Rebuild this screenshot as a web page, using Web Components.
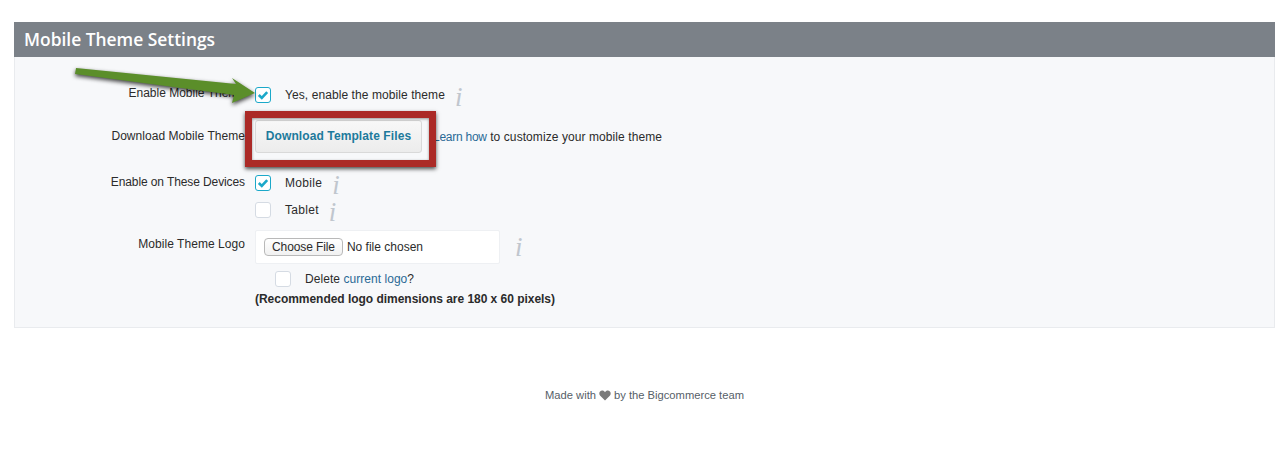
<!DOCTYPE html>
<html>
<head>
<meta charset="utf-8">
<title>Mobile Theme Settings</title>
<style>
    html, body {
        margin: 0;
        padding: 0;
        background: #fff;
        overflow: hidden;
    }
    body {
        font-family: "Liberation Sans", Arial, sans-serif;
        font-size: 12px;
        color: #2b2b2b;
    }
    a {
        color: #2a6a96;
        text-decoration: none;
    }
</style>
</head>
<body>
<settings-panel heading="Mobile Theme Settings">
    <setting-row label="Enable Mobile Theme" height="63" pad="30" label-pad="29">
        <check-box checked></check-box>
        <span style="margin-left:14px;letter-spacing:.08px">Yes, enable the mobile theme</span>
        <info-icon style="margin-left:10px"></info-icon>
    </setting-row>
    <setting-row label="Download Mobile Theme" height="55" pad="0" label-pad="9" style="--label-spacing:.05px">
        <action-button>Download Template Files</action-button>
        <span style="margin:9px 0 0 11px;letter-spacing:.08px"><a href="#" style="letter-spacing:-.25px">Learn how</a> to customize your mobile theme</span>
    </setting-row>
    <setting-row label="Enable on These Devices" height="27" pad="0" label-pad="0" style="--label-spacing:-.1px">
        <check-box checked></check-box>
        <span style="margin-left:14px;letter-spacing:.3px">Mobile</span>
        <info-icon style="margin-left:10px"></info-icon>
    </setting-row>
    <setting-row label="" height="28" pad="0">
        <check-box></check-box>
        <span style="margin-left:14px;letter-spacing:.3px">Tablet</span>
        <info-icon style="margin-left:10px"></info-icon>
    </setting-row>
    <setting-row label="Mobile Theme Logo" height="41" pad="0" label-pad="7" style="--label-spacing:.05px">
        <file-picker></file-picker>
        <info-icon style="margin:7px 0 0 15px"></info-icon>
    </setting-row>
    <setting-row label="" height="20" pad="0" indent="20">
        <check-box></check-box>
        <span style="margin-left:14px;letter-spacing:.05px">Delete <a href="#">current logo</a>?</span>
    </setting-row>
    <setting-row label="" height="16" pad="0">
        <b style="letter-spacing:-.03px">(Recommended logo dimensions are 180 x 60 pixels)</b>
    </setting-row>
</settings-panel>
<site-footer></site-footer>
<screenshot-marks></screenshot-marks>

<script>
class SettingsPanel extends HTMLElement {
    constructor() {
        super();
        this.attachShadow({ mode: "open" });
    }

    connectedCallback() {
        this.shadowRoot.innerHTML = `
        <style>
            :host {
                display: block;
                margin: 22px 3px 0 14px;
            }
            h1 {
                margin: 0;
                height: 35px;
                padding-left: 10px;
                background: #7b8188;
                color: #fff;
                font: 600 17.4px/35px "Open Sans", sans-serif;
            }
            .body {
                height: 271px;
                box-sizing: border-box;
                background: #f7f8fa;
                border: 1px solid #e9ebee;
                border-top: 0;
            }
        </style>
        <h1>${this.getAttribute("heading")}</h1>
        <div class="body"><slot></slot></div>`;
    }
}

class SettingRow extends HTMLElement {
    constructor() {
        super();
        this.attachShadow({ mode: "open" });
    }

    connectedCallback() {
        const height = this.getAttribute("height");
        const pad = this.getAttribute("pad") || 0;
        const labelPad = this.getAttribute("label-pad") || 0;
        const indent = this.getAttribute("indent") || 0;
        this.shadowRoot.innerHTML = `
        <style>
            :host {
                display: grid;
                grid-template-columns: 230px 1fr;
                column-gap: 10px;
                box-sizing: border-box;
                height: ${height}px;
            }
            .label {
                text-align: right;
                line-height: 14px;
                margin-top: ${labelPad}px;
                letter-spacing: var(--label-spacing, 0);
            }
            .control {
                display: flex;
                align-items: flex-start;
                padding: ${pad}px 0 0 ${indent}px;
                line-height: 16px;
            }
        </style>
        <div class="label">${this.getAttribute("label")}</div>
        <div class="control"><slot></slot></div>`;
    }
}

class CheckBox extends HTMLElement {
    constructor() {
        super();
        this.attachShadow({ mode: "open" });
    }

    connectedCallback() {
        const on = this.hasAttribute("checked");
        this.shadowRoot.innerHTML = `
        <style>
            :host {
                display: block;
                flex: none;
                width: 16px;
                height: 16px;
                box-sizing: border-box;
                border-radius: 3px;
                background: #fff;
                border: 1px solid ${on ? "#1ba8c9" : "#d5dbe3"};
            }
            svg { display: block; }
        </style>
        ${on ? `<svg width="14" height="14" viewBox="0 0 14 14"><path d="M2.800 7l3 3 5.400-5.800" fill="none" stroke="#1ba8c9" stroke-width="2.600"/></svg>` : ""}`;
    }
}

class InfoIcon extends HTMLElement {
    constructor() {
        super();
        this.attachShadow({ mode: "open" });
    }

    connectedCallback() {
        this.shadowRoot.innerHTML = `
        <style>
            :host {
                display: block;
                flex: none;
                font: italic 27px/20px "Liberation Serif", serif;
                color: #c0c6ce;
            }
        </style>i`;
    }
}

class ActionButton extends HTMLElement {
    constructor() {
        super();
        this.attachShadow({ mode: "open" });
    }

    connectedCallback() {
        this.shadowRoot.innerHTML = `
        <style>
            :host {
                display: block;
                flex: none;
                width: 167px;
                height: 33px;
                box-sizing: border-box;
                border: 1px solid #d9d9d9;
                border-radius: 3px;
                background: linear-gradient(#f8f8f8, #ececec);
                color: #1d7a9c;
                font-weight: bold;
                letter-spacing: .1px;
                text-align: center;
                line-height: 31px;
            }
        </style><slot></slot>`;
    }
}

class FilePicker extends HTMLElement {
    constructor() {
        super();
        this.attachShadow({ mode: "open" });
    }

    connectedCallback() {
        this.shadowRoot.innerHTML = `
        <style>
            :host {
                display: flex;
                align-items: center;
                flex: none;
                width: 245px;
                height: 34px;
                box-sizing: border-box;
                padding-left: 8px;
                background: #fff;
                border: 1px solid #eef0f3;
                border-radius: 2px;
            }
            .btn {
                height: 18px;
                line-height: 16px;
                box-sizing: border-box;
                padding: 0 7px;
                margin-right: 4px;
                border: 1px solid #b9b9b9;
                border-radius: 4px;
                background: linear-gradient(#fff, #f1f1f1);
                letter-spacing: -.1px;
            }
        </style>
        <span class="btn">Choose File</span><span>No file chosen</span>`;
    }
}

class SiteFooter extends HTMLElement {
    constructor() {
        super();
        this.attachShadow({ mode: "open" });
    }

    connectedCallback() {
        this.shadowRoot.innerHTML = `
        <style>
            :host {
                display: flex;
                justify-content: center;
                align-items: center;
                gap: 3px;
                margin-top: 59px;
                padding-left: 11px;
                height: 16px;
                font-size: 11.2px;
                color: #566068;
            }
            svg { display: block; }
        </style>
        <span>Made with</span>
        <svg width="12" height="11" viewBox="0 0 12 11"><path d="M6 10.600L1.200 5.800C-.6 3.800.5.6 3.200.6 4.400.6 5.400 1.200 6 2.200 6.600 1.200 7.600.6 8.800.6c2.700 0 3.800 3.200 2 5.200z" fill="#7a7a7a"/></svg>
        <span>by the Bigcommerce team</span>`;
    }
}

// the arrow and the red box were painted over the page, so they float on top
class ScreenshotMarks extends HTMLElement {
    constructor() {
        super();
        this.attachShadow({ mode: "open" });
    }

    connectedCallback() {
        this.shadowRoot.innerHTML = `
        <style>
            :host {
                display: block;
                position: absolute;
                left: 0;
                top: 0;
            }
            .box {
                position: absolute;
                left: 245px;
                top: 111px;
                width: 191px;
                height: 56px;
                box-sizing: border-box;
                border: 7px solid #ab2a27;
                box-shadow: 0 2px 4px rgba(0, 0, 0, 0.7), inset 0 1px 3px rgba(0, 0, 0, 0.4);
            }
            svg {
                position: absolute;
                left: 60px;
                top: 60px;
                overflow: visible;
                filter: drop-shadow(0 2px 2px rgba(0, 0, 0, 0.75));
            }
        </style>
        <div class="box"></div>
        <svg width="210" height="50" viewBox="60 60 210 50">
            <path d="M76 68L236 84L232 78L255 93L232 103L234 95L75 74z" fill="#5b8e2a"/>
        </svg>`;
    }
}

customElements.define("settings-panel", SettingsPanel);
customElements.define("setting-row", SettingRow);
customElements.define("check-box", CheckBox);
customElements.define("info-icon", InfoIcon);
customElements.define("action-button", ActionButton);
customElements.define("file-picker", FilePicker);
customElements.define("site-footer", SiteFooter);
customElements.define("screenshot-marks", ScreenshotMarks);
</script>
</body>
</html>
